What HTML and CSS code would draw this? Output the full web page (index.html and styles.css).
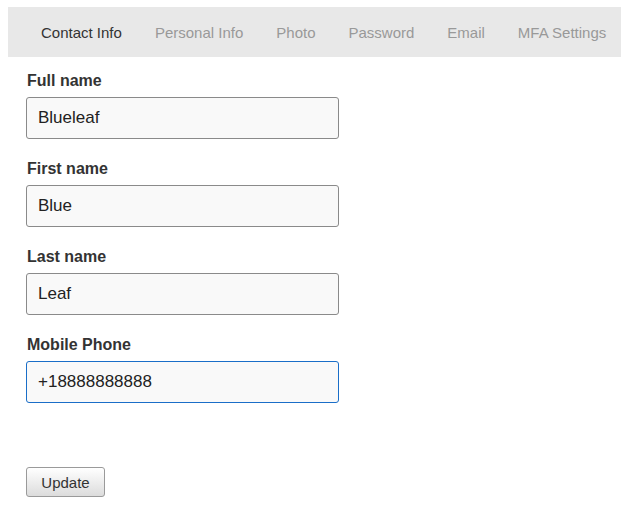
FILE: index.html
```html
<!DOCTYPE html>
<html lang="en">
<head>
<meta charset="utf-8">
<title>Profile</title>
<link rel="stylesheet" href="styles.css">
</head>
<body>
<div class="page">
  <nav class="tabs">
    <a class="tab active">Contact Info</a>
    <a class="tab">Personal Info</a>
    <a class="tab">Photo</a>
    <a class="tab">Password</a>
    <a class="tab">Email</a>
    <a class="tab">MFA Settings</a>
  </nav>
  <form class="form">
    <div class="field">
      <label class="label">Full name</label>
      <input class="input" type="text" value="Blueleaf">
    </div>
    <div class="field">
      <label class="label">First name</label>
      <input class="input" type="text" value="Blue">
    </div>
    <div class="field">
      <label class="label">Last name</label>
      <input class="input" type="text" value="Leaf">
    </div>
    <div class="field">
      <label class="label">Mobile Phone</label>
      <input class="input focused" type="text" value="+18888888888">
    </div>
    <div class="actions">
      <button class="button" type="button">Update</button>
    </div>
  </form>
</div>
</body>
</html>
```
FILE: styles.css
```css
html, body {
  margin: 0;
  padding: 0;
  background: #fff;
}
body {
  font-family: "Liberation Sans", Arial, sans-serif;
  color: #333;
}
.page {
  padding: 7px 0 0 8px;
}
.tabs {
  display: flex;
  gap: 33px;
  padding-left: 33px;
  height: 50px;
  background: #e8e8e8;
  align-items: center;
}
.tab {
  font-size: 15px;
  line-height: 50px;
  padding-top: 1px;
  color: #999;
  white-space: nowrap;
}
.tab.active {
  color: #333;
}
.form {
  display: flex;
  flex-direction: column;
  padding: 15px 0 0 18px;
}
.field {
  display: flex;
  flex-direction: column;
  align-items: flex-start;
  margin-bottom: 21px;
}
.label {
  font-size: 16px;
  line-height: 18px;
  font-weight: bold;
  color: #333;
  padding-left: 1px;
}
.input {
  margin: 7px 0 0 0;
  box-sizing: border-box;
  width: 313px;
  height: 42px;
  padding: 0 11px 1px;
  font-family: "Liberation Sans", Arial, sans-serif;
  font-size: 17px;
  color: #222;
  background: #f9f9f9;
  border: 1px solid #8a8a8a;
  border-radius: 3px;
  outline: none;
}
.input.focused {
  border-color: #1a6ec8;
}
.actions {
  padding-top: 43px;
}
.button {
  box-sizing: border-box;
  height: 30px;
  padding: 0 14px;
  width: 79px;
  font-family: "Liberation Sans", Arial, sans-serif;
  font-size: 15px;
  color: #333;
  background: linear-gradient(#ffffff, #dcdcdc);
  border: 1px solid #9a9a9a;
  border-radius: 3px;
}
```
